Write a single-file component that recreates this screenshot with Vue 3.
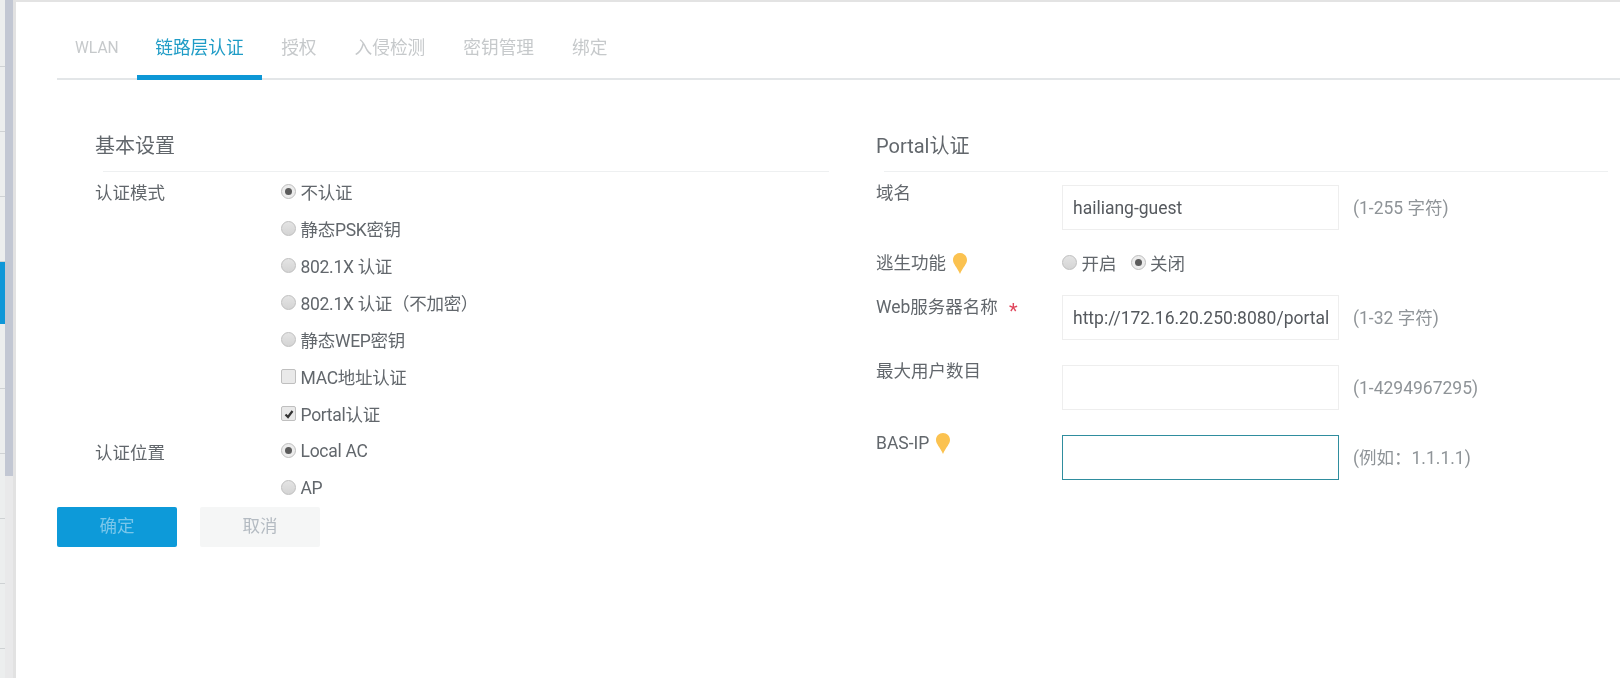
<script setup>
const tabs = ['WLAN', '链路层认证', '授权', '入侵检测', '密钥管理', '绑定']
const modes = [
  { type: 'radio', text: '不认证', on: true },
  { type: 'radio', text: '静态PSK密钥' },
  { type: 'radio', text: '802.1X 认证' },
  { type: 'radio', text: '802.1X 认证（不加密）' },
  { type: 'radio', text: '静态WEP密钥' },
  { type: 'check', text: 'MAC地址认证' },
  { type: 'check', text: 'Portal认证', on: true }
]
const places = [
  { type: 'radio', text: 'Local AC', on: true },
  { type: 'radio', text: 'AP' }
]
const sideRows = [0, 1, 2, 3, 4, 5, 6, 7, 8, 9]
</script>

<template>
  <div class="page">
    <aside class="side">
      <div v-for="i in sideRows" :key="i" class="side-row" :class="{ active: i === 4 }"></div>
    </aside>
    <div class="scroll"><div class="thumb"></div></div>
    <main class="main">
      <nav class="tabs">
        <a v-for="(t, i) in tabs" :key="t" class="tab" :class="{ active: i === 1 }">{{ t }}</a>
      </nav>
      <div class="cols">
        <section class="left">
          <h3 class="head">基本设置</h3>
          <div class="opt-group">
            <div class="lbl">认证模式</div>
            <div class="opts">
              <label v-for="m in modes" :key="m.text" class="opt">
                <span :class="[m.type, { on: m.on }]">
                  <svg v-if="m.type === 'check' && m.on" viewBox="0 0 12 12" width="12" height="12"><path d="M2.5 6.5 L5 9 L9.5 3" fill="none" stroke="#333" stroke-width="2.2"/></svg>
                </span>{{ m.text }}
              </label>
            </div>
          </div>
          <div class="opt-group">
            <div class="lbl">认证位置</div>
            <div class="opts">
              <label v-for="m in places" :key="m.text" class="opt">
                <span :class="[m.type, { on: m.on }]"></span>{{ m.text }}
              </label>
            </div>
          </div>
        </section>
        <section class="right">
          <h3 class="head">Portal认证</h3>
          <div class="frow first">
            <div class="flabel">域名</div>
            <input class="inp" value="hailiang-guest" readonly />
            <span class="hint">(1-255 字符)</span>
          </div>
          <div class="frow switch">
            <div class="flabel">逃生功能<svg class="bulb" viewBox="0 0 14 21" width="14" height="21"><path d="M7 0 C11 0 14 3 14 7 C14 11 10 14 7 21 C4 14 0 11 0 7 C0 3 3 0 7 0 Z" fill="#fbc250"/></svg></div>
            <div class="inline">
              <label class="opt"><span class="radio"></span>开启</label>
              <label class="opt"><span class="radio on"></span>关闭</label>
            </div>
          </div>
          <div class="frow">
            <div class="flabel">Web服务器名称<span class="star">*</span></div>
            <input class="inp" value="http://172.16.20.250:8080/portal" readonly />
            <span class="hint">(1-32 字符)</span>
          </div>
          <div class="frow max">
            <div class="flabel">最大用户数目</div>
            <input class="inp" value="" readonly />
            <span class="hint">(1-4294967295)</span>
          </div>
          <div class="frow">
            <div class="flabel">BAS-IP<svg class="bulb" viewBox="0 0 14 21" width="14" height="21"><path d="M7 0 C11 0 14 3 14 7 C14 11 10 14 7 21 C4 14 0 11 0 7 C0 3 3 0 7 0 Z" fill="#fbc250"/></svg></div>
            <input class="inp focus" value="" readonly />
            <span class="hint">(例如：1.1.1.1)</span>
          </div>
        </section>
      </div>
      <div class="btns">
        <button class="btn ok">确定</button>
        <button class="btn cancel">取消</button>
      </div>
    </main>
  </div>
</template>

<style>
html, body { margin: 0; background: #fff; overflow: hidden; }
</style>

<style scoped>
.page {
  display: flex;
  width: 1620px;
  height: 678px;
  overflow: hidden;
  font-family: Roboto, "Noto Sans CJK SC", sans-serif;
  font-size: 17.5px;
  color: #62676c;
  background: #fff;
  filter: blur(0.35px);
}
.side { width: 5px; background: #eceeee; padding-top: 2px; flex: none; }
.side-row { height: 64px; border-bottom: 1px solid #cfd2d4; }
.side-row.active { background: #0f97d8; height: 62px; border-bottom: 0; }
.scroll { width: 8px; background: #e9e9ea; flex: none; }
.thumb { height: 476px; background: #c2c7d3; }
.main {
  flex: 1;
  min-width: 0;
  border-left: 3px solid #e2e2e2;
  border-top: 2px solid #e3e3e3;
  padding-left: 41px;
  box-sizing: border-box;
}
.tabs {
  display: flex;
  height: 76px;
  border-bottom: 2px solid #e3e6e8;
}
.tab {
  color: #c6c9cb;
  font-size: 17.7px;
  line-height: 92px;
  height: 76px;
  box-sizing: border-box;
  padding: 0 19px;
  white-space: nowrap;
}
.tab:first-child { font-size: 15.6px; padding: 0 18px; }
.tab.active {
  color: #1f9cc6;
  height: 78px;
  padding: 0 18.5px;
  border-bottom: 5px solid #0d97d6;
}
.cols { display: flex; height: 427px; }
.left { width: 772px; flex: none; padding-left: 38px; box-sizing: border-box; }
.right { flex: 1; padding-left: 47px; margin-right: 12px; min-width: 0; }
.head {
  margin: 0;
  font-weight: 400;
  font-size: 20px;
  line-height: 30px;
  height: 92px;
  box-sizing: border-box;
  padding-top: 51px;
  display: flex;
  flex-direction: column;
  justify-content: space-between;
}
.head::after {
  content: "";
  display: block;
  margin-left: 8px;
  border-bottom: 1px solid #eef0f1;
}
.opt-group { display: flex; }
.lbl { width: 186px; flex: none; line-height: 37px; padding-top: 3px; box-sizing: content-box; }
.opts { display: flex; flex-direction: column; padding-top: 1px; letter-spacing: -0.3px; }
.opt-group + .opt-group .opts { padding-top: 0; }
.opt { display: flex; align-items: center; height: 37px; white-space: nowrap; }
.radio, .check {
  flex: none;
  box-sizing: border-box;
  width: 15px;
  height: 15px;
  margin-right: 4.5px;
  background: linear-gradient(#e4e4e4, #d4d4d4);
  border: 1px solid #bfbfbf;
  display: inline-flex;
  align-items: center;
  justify-content: center;
}
.radio { border-radius: 50%; }
.check { border-radius: 2px; background: #e9e9e9; }
.radio.on { background: #ececec; }
.radio.on::after {
  content: "";
  width: 7px;
  height: 7px;
  border-radius: 50%;
  background: #5b5b5b;
}
.frow { display: flex; height: 70px; align-items: flex-start; }
.frow.first { height: 68px; margin-top: 13px; }
.frow.switch { height: 42px; }
.flabel {
  width: 186px;
  flex: none;
  line-height: 22px;
  margin-top: -3px;
  display: flex;
  align-items: center;
}
.switch .flabel { margin-top: -1px; }
.max .flabel { margin-top: -5px; }
.bulb { margin-left: 7px; }
.star { color: #e0475d; margin: 8px 0 0 11px; font-size: 20px; }
.inp {
  width: 277px;
  height: 45px;
  box-sizing: border-box;
  border: 1px solid #eeeeee;
  padding: 0 10px;
  font: inherit;
  color: #55595e;
  outline: none;
  flex: none;
  background: #fff;
}
.inp.focus { border: 1.5px solid #2f8d9e; }
.hint { color: #8f9498; margin-left: 14px; line-height: 47px; white-space: nowrap; }
.inline { display: flex; gap: 14px; margin-top: -9px; }
.btns { display: flex; gap: 23px; }
.btn {
  width: 120px;
  height: 40px;
  border: 0;
  font: inherit;
  font-size: 17.5px;
  border-radius: 2px;
  padding: 0 0 5px;
}
.btn.ok { background: #0d9ad9; color: #79c6ea; }
.btn.cancel { background: #f5f6f6; color: #b4bbc2; }
</style>
